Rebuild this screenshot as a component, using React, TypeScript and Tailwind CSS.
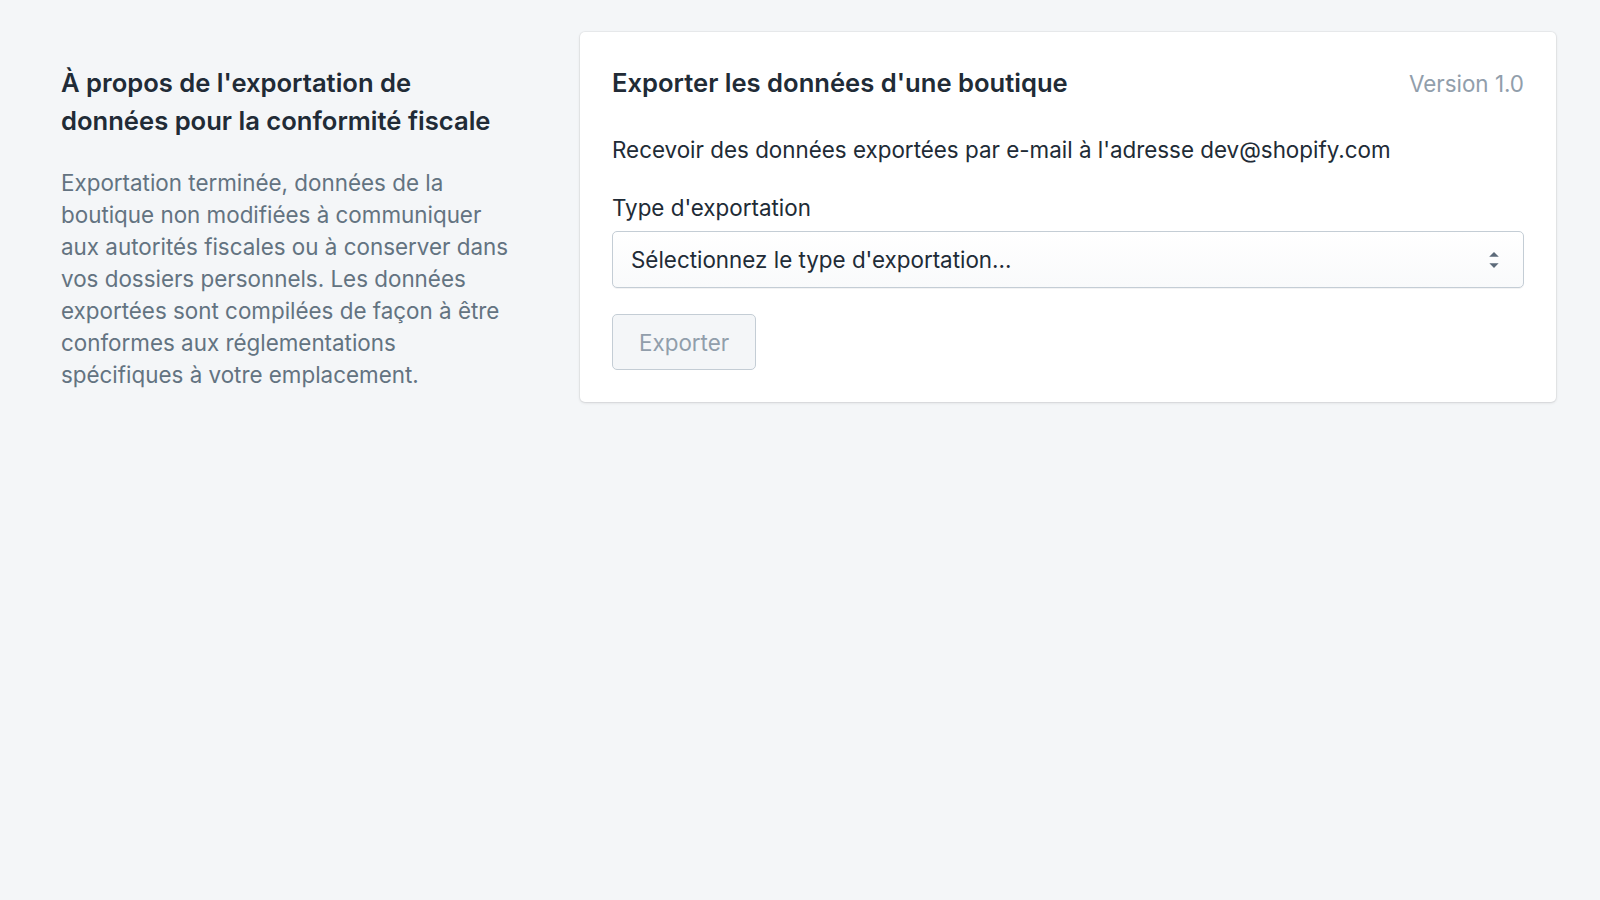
import { ChangeEvent, useState } from "react"

const exportTypes = [
  { value: "", label: "Sélectionnez le type d'exportation..." },
  { value: "fr-fec", label: "Fichier des écritures comptables (FEC)" },
  { value: "fr-ticket", label: "Archive des tickets" },
]

function ArrowUpDown() {
  return (
    <svg viewBox="0 0 20 20" className="h-[32px] w-[32px]" fill="#5c6a79">
      <path d="M13 8l-3-3-3 3h6zm-.1 4L10 15l-2.9-3h5.8z" />
    </svg>
  )
}

export default function App() {
  const [exportType, setExportType] = useState("")

  return (
    <div
      className="min-h-[900px] bg-[#f4f6f8] text-[#212b36]"
      style={{ fontFamily: "Inter, 'Noto Sans', sans-serif" }}
    >
      <div className="flex items-start gap-[64px] pt-[32px] pr-[44px] pl-[61px]">
        {/* Annotation */}
        <div className="w-[455px] shrink-0 pt-[32px]">
          <h2 className="text-[25.6px] leading-[38.4px] font-semibold text-[#212b36]">
            À propos de l'exportation de données pour la conformité fiscale
          </h2>
          <p className="mt-[26px] text-[22.4px] leading-[32px] text-[#637381]">
            Exportation terminée, données de la boutique non modifiées à
            communiquer aux autorités fiscales ou à conserver dans vos dossiers
            personnels. Les données exportées sont compilées de façon à être
            conformes aux réglementations spécifiques à votre emplacement.
          </p>
        </div>

        {/* Card */}
        <div className="flex-1 rounded-[5px] bg-white p-[32px] shadow-[0_0_0_1px_rgba(63,63,68,0.05),0_1px_3px_0_rgba(63,63,68,0.15)]">
          <div className="flex items-baseline justify-between">
            <h2 className="text-[25.6px] leading-[38.4px] font-semibold">
              Exporter les données d'une boutique
            </h2>
            <span className="text-[22.4px] leading-[32px] text-[#919eab]">
              Version 1.0
            </span>
          </div>

          <p className="mt-[32px] text-[22.4px] leading-[32px]">
            Recevoir des données exportées par e-mail à l'adresse
            dev@shopify.com
          </p>

          <label className="mt-[26px] block text-[22.4px] leading-[32px]">
            Type d'exportation
          </label>
          <div className="relative mt-[7px]">
            <select
              value={exportType}
              onChange={(e: ChangeEvent<HTMLSelectElement>) =>
                setExportType(e.target.value)
              }
              className="h-[57px] w-full appearance-none rounded-[5px] border border-[#c4cdd5] bg-gradient-to-b from-white to-[#f9fafb] pr-[48px] pl-[18px] text-[22.4px] text-[#212b36] shadow-[0_1px_0_0_rgba(22,29,37,0.05)] outline-none"
            >
              {exportTypes.map((t) => (
                <option key={t.value} value={t.value}>
                  {t.label}
                </option>
              ))}
            </select>
            <div className="pointer-events-none absolute top-1/2 right-[14px] -translate-y-1/2">
              <ArrowUpDown />
            </div>
          </div>

          <button
            type="button"
            disabled={exportType === ""}
            className="mt-[26px] h-[56px] rounded-[5px] border border-[#c4cdd5] bg-[#f4f6f8] px-[26px] text-[22.4px] text-[#919eab]"
          >
            Exporter
          </button>
        </div>
      </div>
    </div>
  )
}
